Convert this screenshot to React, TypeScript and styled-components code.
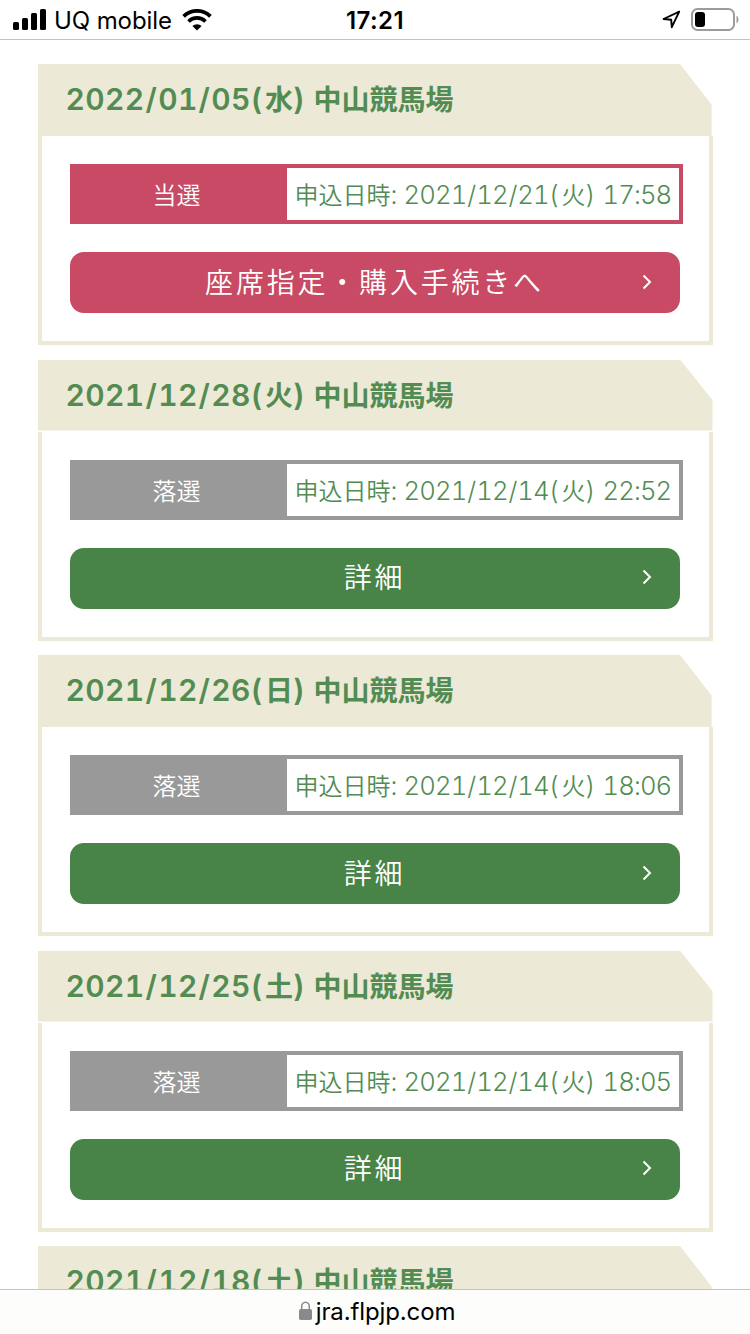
import React from "react";
import styled, { createGlobalStyle } from "styled-components";

const GlobalStyle = createGlobalStyle`
  * { box-sizing: border-box; }
  html, body { margin: 0; padding: 0; background: #fff; }
  body { overflow: hidden; }
`;

const LATIN = `Inter, "Noto Sans CJK JP", sans-serif`;
const JP = `"Noto Sans CJK JP", sans-serif`;
const BEIGE = "#ece9d6";
const ROSE = "#c84a65";
const GRAY = "#999999";
const GREEN = "#488347";
const TEXT_GREEN = "#528c52";

const Screen = styled.div`
  width: 750px;
  height: 1334px;
  display: flex;
  flex-direction: column;
  background: #fff;
  overflow: hidden;
  font-family: ${LATIN};
`;

const StatusBar = styled.header`
  flex: none;
  height: 40px;
  display: grid;
  grid-template-columns: 1fr auto 1fr;
  align-items: center;
  padding: 0 11px 0 13px;
  border-bottom: 1px solid #c4c4c4;
  color: #000;
`;

const Carrier = styled.div`
  display: flex;
  align-items: center;
  font-size: 24px;
  line-height: 36px;
`;

const CarrierName = styled.span`
  padding-top: 3px;
  margin: 0 10px 0 8px;
  letter-spacing: -0.1px;
`;

const Clock = styled.div`
  font-size: 24px;
  font-weight: 600;
  line-height: 36px;
  padding-top: 3px;
  margin-right: 2px;
  letter-spacing: 0.4px;
`;

const Indicators = styled.div`
  display: flex;
  justify-content: flex-end;
  align-items: center;
  gap: 10px;
`;

const List = styled.main`
  flex: 1;
  min-height: 0;
  overflow: hidden;
  padding: 24px 37px 0 38px;
`;

const Card = styled.section`
  margin-bottom: 14.5px;
`;

const CardHeader = styled.h2`
  margin: 0;
  height: 72px;
  padding-left: 27.5px;
  background: ${BEIGE};
  clip-path: polygon(0 0, 642px 0, 673.6px 40.5px, 673.6px 100%, 0 100%);
  color: ${TEXT_GREEN};
  font-family: ${JP};
  font-size: 28px;
  font-weight: 600;
  line-height: 69px;
  white-space: pre;

  ${Card}:nth-child(even) & {
    line-height: 68px;
    clip-path: polygon(0 0, 642px 0, 674.5px 40.5px, 674.5px 71px, 0 71px);
  }
`;

const Digits = styled.span<{ $width?: number; $spacing?: number }>`
  display: inline-block;
  width: ${(p) => (p.$width ? `${p.$width}px` : "auto")};
  font-family: ${LATIN};
  font-size: 1.07em;
  font-variant-numeric: tabular-nums;
  letter-spacing: ${(p) => p.$spacing ?? 0}px;
`;

const Slash = styled.span`
  padding: 0 0.03em;
`;

const CardBody = styled.div`
  height: 209px;
  border: 4px solid ${BEIGE};
  border-top: 0;
  padding: 28px 26px 28px 28px;
  display: flex;
  flex-direction: column;
  gap: 28px;
`;

const ResultRow = styled.div<{ $won: boolean }>`
  height: 60px;
  display: flex;
  border: 4px solid ${(p) => (p.$won ? ROSE : GRAY)};
  background: ${(p) => (p.$won ? ROSE : GRAY)};
  font-family: ${JP};
  font-size: 24px;
  font-weight: 350;
  line-height: 51px;
`;

const ResultLabel = styled.div`
  width: 213px;
  padding-right: 8px;
  text-align: center;
  color: #fff;
`;

const AppliedAt = styled.div`
  flex: 1;
  padding-left: 7.5px;
  background: #fff;
  color: ${TEXT_GREEN};
  white-space: pre;
`;

const ActionButton = styled.button<{ $won: boolean }>`
  width: 610px;
  height: 61px;
  border: 0;
  border-radius: 14px;
  padding: 0 28px 2px 37px;
  display: grid;
  grid-template-columns: 1fr 10px;
  align-items: center;
  background: ${(p) => (p.$won ? ROSE : GREEN)};
  color: #fff;
  font-family: ${JP};
  font-size: 28px;
  font-weight: 350;
  line-height: 56px;
  letter-spacing: 2.8px;
`;

const ActionLabel = styled.span`
  padding-bottom: 2px;
`;

const AddressBar = styled.footer`
  flex: none;
  height: 45px;
  border-top: 1px solid #c4c4c4;
  background: #fdfdfc;
  display: flex;
  justify-content: center;
  align-items: center;
  gap: 4px;
  padding-left: 4px;
  color: #000;
  font-size: 24px;
  line-height: 44px;
`;

const Host = styled.span`
  letter-spacing: -0.12px;
`;

const SignalIcon = () => (
  <svg width="33" height="22" viewBox="0 0 33 22">
    <rect x="0" y="13" width="6" height="8" rx="1.5" />
    <rect x="9" y="9" width="6" height="12" rx="1.5" />
    <rect x="18" y="4" width="6" height="17" rx="1.5" />
    <rect x="27" y="0" width="6" height="21" rx="1.5" />
  </svg>
);

const WifiIcon = () => (
  <svg width="30" height="22" viewBox="0 0 30 22" fill="none" stroke="#000">
    <path d="M1.6 7.4a19 19 0 0 1 26.8 0" strokeWidth="3.8" />
    <path d="M6.5 12.4a12 12 0 0 1 17 0" strokeWidth="3.6" />
    <path d="M10.4 17.1a6.6 6.6 0 0 1 9.2 0L15 21.6z" fill="#000" stroke="none" />
  </svg>
);

const LocationIcon = () => (
  <svg width="19" height="19" viewBox="0 0 19 19" fill="none" stroke="#000" strokeWidth="1.9" strokeLinejoin="round">
    <path d="M17.2 1.6 1.6 9l7.6.8.6 7.4z" />
  </svg>
);

const BatteryIcon = () => (
  <svg width="48" height="23" viewBox="0 0 48 23">
    <rect x="1" y="1" width="42" height="21" rx="5.5" fill="none" stroke="#9b9b9b" strokeWidth="2" />
    <rect x="4" y="4" width="10" height="15" rx="3" />
    <path d="M45.5 7.5c2.6 1.4 2.6 6.6 0 8z" fill="#9b9b9b" />
  </svg>
);

const ChevronIcon = () => (
  <svg width="10" height="16" viewBox="0 0 10 16" fill="none" stroke="#fff" strokeWidth="2">
    <path d="M1.5 1.5 8 8l-6.5 6.5" />
  </svg>
);

const LockIcon = () => (
  <svg width="13" height="22" viewBox="0 0 13 22">
    <path d="M2.7 9V5.5a3.8 4.3 0 0 1 7.6 0V9" fill="none" stroke="#8a8a8c" strokeWidth="1.5" />
    <rect x="0" y="8" width="13" height="11" rx="1.8" fill="#8a8a8c" />
  </svg>
);

type Entry = {
  date: string;
  day: string;
  won: boolean;
  applied: string;
  time: string;
};

const entries: Entry[] = [
  { date: "2022/01/05", day: "水", won: true, applied: "2021/12/21", time: "17:58" },
  { date: "2021/12/28", day: "火", won: false, applied: "2021/12/14", time: "22:52" },
  { date: "2021/12/26", day: "日", won: false, applied: "2021/12/14", time: "18:06" },
  { date: "2021/12/25", day: "土", won: false, applied: "2021/12/14", time: "18:05" },
  { date: "2021/12/18", day: "土", won: false, applied: "2021/12/11", time: "18:05" },
];

type DateTextProps = { value: string; width: number; spacing: number };

const DateText = ({ value, width, spacing }: DateTextProps) => {
  const [year, month, day] = value.split("/");
  return (
    <Digits $width={width} $spacing={spacing}>
      {year}
      <Slash>/</Slash>
      {month}
      <Slash>/</Slash>
      {day}(
    </Digits>
  );
};

const EntryCard = ({ date, day, won, applied, time }: Entry) => (
  <Card>
    <CardHeader>
      <DateText value={date} width={199.5} spacing={0.4} />
      {day}
      <Digits $width={20.5}>)</Digits>
      中山競馬場
    </CardHeader>
    <CardBody>
      <ResultRow $won={won}>
        <ResultLabel>{won ? "当選" : "落選"}</ResultLabel>
        <AppliedAt>
          申込日時
          <Digits $width={13}>:</Digits>
          <DateText value={applied} width={158} spacing={-0.85} />
          火
          <Digits $width={17}>)</Digits>
          <Digits $spacing={-0.9}>{time}</Digits>
        </AppliedAt>
      </ResultRow>
      <ActionButton $won={won}>
        <ActionLabel>{won ? "座席指定・購入手続きへ" : "詳細"}</ActionLabel>
        <ChevronIcon />
      </ActionButton>
    </CardBody>
  </Card>
);

export default function App() {
  return (
    <>
      <GlobalStyle />
      <Screen>
        <StatusBar>
          <Carrier>
            <SignalIcon />
            <CarrierName>UQ mobile</CarrierName>
            <WifiIcon />
          </Carrier>
          <Clock>17:21</Clock>
          <Indicators>
            <LocationIcon />
            <BatteryIcon />
          </Indicators>
        </StatusBar>
        <List>
          {entries.map((entry) => (
            <EntryCard key={entry.date} {...entry} />
          ))}
        </List>
        <AddressBar>
          <LockIcon />
          <Host>jra.flpjp.com</Host>
        </AddressBar>
      </Screen>
    </>
  );
}
